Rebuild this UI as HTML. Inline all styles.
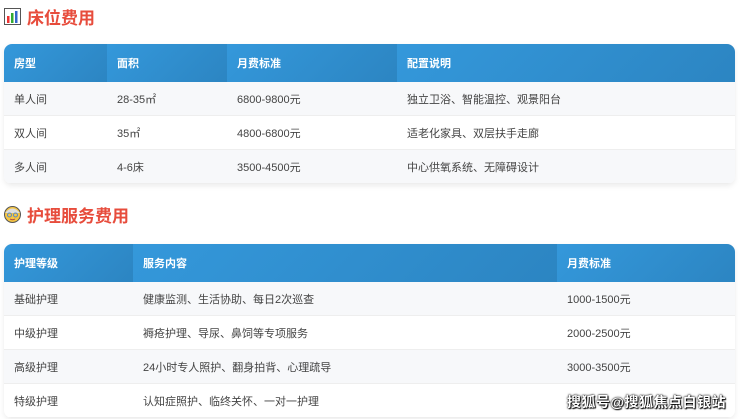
<!DOCTYPE html>
<html><head><meta charset="utf-8"><style>
body{margin:0;background:#fff;font-family:"Liberation Sans","Noto Sans CJK SC",sans-serif;width:740px;height:419px;overflow:hidden;position:relative}
h2{position:absolute;left:4px;margin:0;font-size:17px;color:#e74c3c;font-weight:bold;display:flex;align-items:center;gap:6px}
.ic{width:17px;height:17px;display:inline-block}
table{position:absolute;left:4px;width:731px;border-collapse:collapse;border-radius:8px;overflow:hidden;box-shadow:0 2px 6px rgba(0,0,0,.08);font-size:11px;color:#444}
th{background:linear-gradient(135deg,#3498db,#2c85c2);color:#fff;text-align:left;font-weight:bold;padding:0 10px;height:38px;font-size:11px}
td{padding:0 10px;height:33px;border-bottom:1px solid #eee}
tr:nth-child(even) td{background:#f7f8fa}
tr:nth-child(odd) td{background:#fff}
.wm{position:absolute;right:14px;bottom:7px;color:#fff;font-size:14px;font-weight:bold;text-shadow:0 0 1px #000,0 0 2px #000,1px 1px 1px #000;letter-spacing:0.5px}
</style></head><body>
<h2 style="top:4px"><svg class="ic" viewBox="0 0 17 17"><rect x="0.5" y="0.5" width="16" height="16" fill="#fff" stroke="#555"/><rect x="3" y="8" width="2.5" height="7" fill="#e33"/><rect x="7" y="5" width="2.5" height="10" fill="#3a3"/><rect x="11" y="3" width="2.5" height="12" fill="#36c"/></svg>床位费用</h2>
<table style="top:44px">
<tr><th style="width:83px">房型</th><th style="width:100px">面积</th><th style="width:150px">月费标准</th><th>配置说明</th></tr>
<tr><td>单人间</td><td>28-35㎡</td><td>6800-9800元</td><td>独立卫浴、智能温控、观景阳台</td></tr>
<tr><td>双人间</td><td>35㎡</td><td>4800-6800元</td><td>适老化家具、双层扶手走廊</td></tr>
<tr><td>多人间</td><td>4-6床</td><td>3500-4500元</td><td>中心供氧系统、无障碍设计</td></tr>
</table>
<h2 style="top:202px"><svg class="ic" viewBox="0 0 17 17"><circle cx="8.5" cy="8.5" r="8" fill="#f5c542" stroke="#555"/><path d="M1 7Q8.5-2 16 7" fill="#ddd"/><circle cx="5.5" cy="9" r="2" fill="none" stroke="#58c"/><circle cx="11.5" cy="9" r="2" fill="none" stroke="#58c"/><path d="M6 13q2.5 1.5 5 0" stroke="#a44" fill="none"/></svg>护理服务费用</h2>
<table style="top:244px">
<tr><th style="width:109px">护理等级</th><th style="width:404px">服务内容</th><th>月费标准</th></tr>
<tr><td>基础护理</td><td>健康监测、生活协助、每日2次巡查</td><td>1000-1500元</td></tr>
<tr><td>中级护理</td><td>褥疮护理、导尿、鼻饲等专项服务</td><td>2000-2500元</td></tr>
<tr><td>高级护理</td><td>24小时专人照护、翻身拍背、心理疏导</td><td>3000-3500元</td></tr>
<tr><td>特级护理</td><td>认知症照护、临终关怀、一对一护理</td><td></td></tr>
</table>
<div class="wm">搜狐号@搜狐焦点白银站</div>
</body></html>
